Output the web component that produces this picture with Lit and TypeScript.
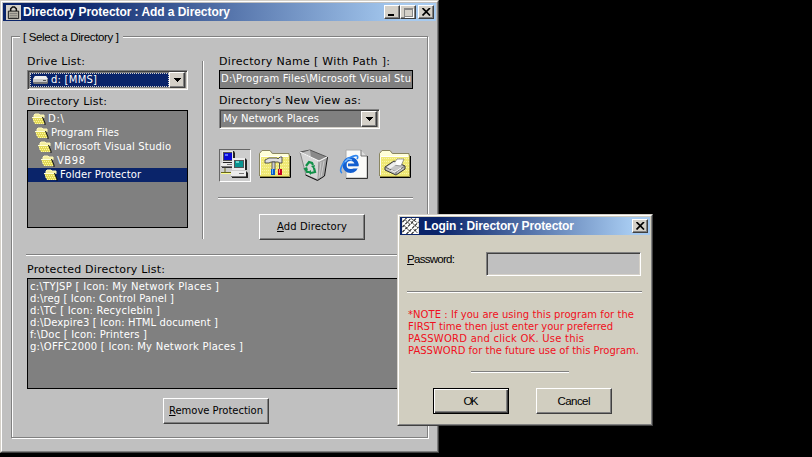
import { LitElement, html, svg, css } from "lit";
import { customElement, property } from "lit/decorators.js";

/* One line of text whose tracking is set so that it fills a given width. */
@customElement("fit-text")
class FitText extends LitElement {
  @property({ type: Number }) width = 0;
  static styles = css`
    :host { display: block; white-space: pre; flex: none; }
    .run { display: inline-block; white-space: pre; }
  `;
  firstUpdated() {
    const run = this.renderRoot.querySelector(".run") as HTMLElement;
    const n = (this.textContent || "").length;
    const natural = run.getBoundingClientRect().width;
    if (n > 1 && this.width) {
      const gap = (this.width - natural) / (n - 1);
      run.style.letterSpacing = `${gap.toFixed(3)}px`;
      run.style.marginRight = `${(-gap).toFixed(3)}px`;
    }
  }
  render() {
    return html`<span class="run"><slot></slot></span>`;
  }
}

const folder = svg`
  <path d="M1 8V4l2-2h8l2 3h17v3z" fill="#ffffd8"/>
  <path d="M1 7h29v20H1z" fill="#efe874"/>
  <path d="M1 9.500h29M1 12.500h29M1 15.500h29M1 18.500h29M1 21.500h29M1 24.500h29" stroke="#faf6a8" stroke-dasharray="1 1"/>
  <path d="M.5 27V4.500l2.500-3h8l2.500 3h16.500v2" fill="none" stroke="#8a8660"/>
  <path d="M1.500 26V7.500h28" stroke="#fff" fill="none"/>
  <path d="M30.500 6v21.500H1" fill="none" stroke="#999040"/>
  <path d="M31.500 7v21.500H1" fill="none" stroke="#000"/>`;

const icons = {
  network: svg`
    <path d="M4 2h11l1 2v10H4z" fill="#222"/>
    <path d="M3 2h11v11H3z" fill="#e4e4e4"/><path d="M4 3h9v9H4z" fill="#555"/>
    <path d="M5 4h8v7H5z" fill="#0808d4"/><path d="M6 5h3v2H6z" fill="#5b70ff"/>
    <path d="M3 14h13v5H3z" fill="#333"/><path d="M2 14h12v4H2z" fill="#ececec"/><path d="M8 15h5v1H8zM2 17h12v1H2z" fill="#777"/>
    <path d="M6 19v4M2 23.500h11" stroke="#66661c" fill="none"/><path d="M2 24.500h11" stroke="#ffff90" fill="none"/>
    <path d="M15 9h11l2 2v10H15z" fill="#222"/>
    <path d="M13 9h13v12H13z" fill="#ececec"/><path d="M15 11h10v8H15z" fill="#555"/>
    <path d="M16 12h8v6h-8z" fill="#089490"/><path d="M17 12h3v2h-3z" fill="#6bd6ca"/>
    <path d="M13 22h14l2 2v5H13z" fill="#222"/><path d="M12 22h15v6H12z" fill="#ececec"/>
    <path d="M20 24h5v1h-5zM12 27h15v1H12z" fill="#777"/>`,
  panel: svg`${folder}
    <path d="M6 11l4-2h8l1 1 2-2h2v6h-2l-2-1h-7l-2 1H6z" fill="#e0e0e0" stroke="#333" stroke-width=".8"/>
    <path d="M13 13h3v8h-3z" fill="#ccc" stroke="#333" stroke-width=".7"/>
    <path d="M20 14h1v7h-1z" fill="#555"/>
    <path d="M12 20h4v6h-4z" fill="#075bc8"/><path d="M13 20h1v5h-1z" fill="#61b4ff"/>
    <path d="M19 20h4v6h-4z" fill="#c40022"/><path d="M20 20h1v4h-1z" fill="#ff8190"/>`,
  bin: svg`
    <path d="M1 3l10-2 17 7-8 4z" fill="#8a8a8a" stroke="#555"/>
    <path d="M11 1l1 7-9-4z" fill="#bbb"/>
    <path d="M1 3l6 23 12 5 1-19z" fill="#d6d6d6" stroke="#888"/>
    <path d="M20 12l8-4-3 19-6 4z" fill="#a4a4a4"/>
    <path d="M22 13l-2 16M25 12l-3 16" stroke="#ccc"/>
    <path d="M28.500 8l-3 19-7 4.500-12-5.500" fill="none" stroke="#111"/>
    <path d="M1 3l19 9 8-4" fill="none" stroke="#f6f6f6" stroke-width="1.200"/>
    <path d="M7 17l3-4 3 1 1 2M15 19l1 4-4 1M6 19l2 4h2" fill="none" stroke="#129048" stroke-width="2.200"/>
    <path d="M12 17l4-1-1 4zM12 21v5l-3-3zM4 20l4-2 1 3z" fill="#129048"/>`,
  ie: svg`
    <path d="M7 1h15l6 6v22H7z" fill="#fafaf8" stroke="#aaa"/>
    <path d="M22 1v6h6" fill="#ddd" stroke="#777"/><path d="M28.500 7v22.500H7" fill="none" stroke="#333"/>
    <ellipse cx="11.500" cy="16" rx="6" ry="6" fill="none" stroke="#145fd0" stroke-width="4"/>
    <path d="M12 17h9v2.500h-9z" fill="#fafaf8"/><path d="M9 14.500h10.500v2.800H9z" fill="#145fd0"/>
    <path d="M3 24C-1 22 4 12 11 8.500S20 7 18 10" fill="none" stroke="#2e86f0" stroke-width="1.600"/>
    <path d="M6 13l3-3 4 1" fill="none" stroke="#78baff" stroke-width="1.400"/>`,
  printer: svg`${folder}
    <path d="M6 18l9-6 11 5v3l-9 6-11-5z" fill="#c5c5c5" stroke="#333"/>
    <path d="M6 18l11 5 9-6M17 23v3" fill="none" stroke="#666"/>
    <path d="M14 16l4-6h7l-3 7z" fill="#fff" stroke="#777" stroke-width=".7"/>
    <path d="M8 18l7-5 3 2-7 5z" fill="#eee"/><path d="M12 21l4 2 6-4" stroke="#fff" fill="none"/>`,
};

const openFolder = svg`<svg width="14" height="12" viewBox="0 0 14 12">
  <path d="M2 9V2l1-1h4l1 1h4v3" fill="#f3eea0" stroke="#fff8bc"/>
  <path d="M0 4h10l3 7H3z" fill="#e2d956"/><path d="M0 4.500h10" stroke="#ffffd8"/>
  <path d="M1 6.500h9M2 8.500h9M3 10.500h9" stroke="#fff7a0" stroke-dasharray="1 1"/>
  <path d="M10.500 4l2.500 6v2" fill="none" stroke="#111"/></svg>`;

const cross = svg`<svg width="9" height="8" viewBox="0 0 9 8"><path d="M.5 0l7.500 7.500M8 0L.5 7.500" stroke="#000" stroke-width="1.700"/></svg>`;

@customElement("app-root")
class AppRoot extends LitElement {
  static styles = css`
    :host { display: block; position: relative; width: 812px; height: 457px; background: #000; overflow: hidden; color: #000; }
    * { box-sizing: border-box; }
    svg { display: block; flex: none; }
    .window { position: absolute; display: flex; flex-direction: column; border: 1px solid; border-color: #d4d0c8 #404040 #404040 #d4d0c8; }
    .inner { flex: 1; display: flex; flex-direction: column; border: 1px solid; border-color: #fff #808080 #808080 #fff; padding: 1px; }
    .main { left: 0; top: 0; width: 439px; height: 453px; background: #c0c0c0; }
    .login { left: 397px; top: 214px; width: 256px; height: 212px; background: #d1cec0; }
    .bar { height: 18px; flex: none; display: flex; align-items: center; padding-right: 2px; background: linear-gradient(90deg, #0a246a 15%, #a6caf0 92%); color: #fff; font: bold 12px/18px "Liberation Sans", sans-serif; }
    .bar .grow { flex: 1; }
    .lock { width: 15px; height: 15px; margin: 0 2px 0 3px; background: #d4d0c8; }
    .login .lock { width: 17px; height: 16px; margin: 0 5px 0 2px; }
    .sys { width: 16px; height: 14px; display: flex; align-items: center; justify-content: center; background: #d4d0c8; border: 1px solid; border-color: #fff #404040 #404040 #fff; box-shadow: inset -1px -1px #808080; }
    .sys.gap { margin-left: 2px; }
    .min { width: 6px; height: 2px; background: #000; margin: 6px 2px 0 0; }
    .max { width: 9px; height: 9px; border: 1px solid #888; border-top-width: 2px; box-shadow: 1px 1px #fff; }

    .frame { margin: 15px 8px 12px 8px; flex: 1; border: 1px solid #808080; box-shadow: inset 1px 1px #fff, 1px 1px #fff; padding: 0 13px 0 15px; min-height: 0; display: flex; flex-direction: column; }
    .legend { align-self: flex-start; height: 14px; margin: -7px 0 0 -7px; padding: 0 4px 0 3px; background: #c0c0c0; font: 11.500px/14px "Liberation Sans", sans-serif; }
    .cols { display: flex; height: 187px; margin-top: 9px; }
    .left { width: 161px; padding-top: 1px; }
    .vline { width: 2px; height: 178px; margin: 8px 15px 0 14px; background: linear-gradient(90deg, #808080 50%, #fff 50%); }
    .right { width: 194px; padding-top: 1px; }
    .label { height: 16px; font: 11px/15px "DejaVu Sans", sans-serif; }
    .label.second { margin-top: 4px; }
    .small { font: 10px/14px "DejaVu Sans", sans-serif; color: #fff; }
    .combo { height: 20px; display: flex; border: 1px solid; border-color: #808080 #fff #fff #808080; box-shadow: inset 1px 1px #404040, inset -1px -1px #d4d0c8; padding: 2px; background: #808080; align-items: center; }
    .combo.view { width: 161px; padding-left: 3px; }
    .chosen { width: 140px; height: 14px; display: flex; align-items: center; background: #0a246a; outline: 1px dotted #d4d0c8; outline-offset: -1px; padding: 0 0 0 3px; gap: 3px; }
    .view fit-text { flex: 1; }
    .drop { margin-left: auto; width: 16px; height: 16px; flex: none; display: flex; align-items: center; justify-content: center; background: #d4d0c8; border: 1px solid; border-color: #fff #404040 #404040 #fff; box-shadow: inset -1px -1px #808080; }
    .list { border: 1px solid #000; background: #808080; overflow: hidden; }
    .tree { height: 118px; padding-top: 1px; }
    .row { height: 14px; display: flex; align-items: center; gap: 2px; }
    .row.on { background: #0a246a; }
    .l0 { padding-left: 4px; } .l1 { padding-left: 7px; } .l2 { padding-left: 10px; } .l3 { padding-left: 13px; } .l4 { padding-left: 16px; }
    .field { height: 19px; border: 1px solid #000; background: #808080; overflow: hidden; padding: 1px 0 0 1px; margin-bottom: 1px; }
    .icons { display: flex; margin-top: 20px; gap: 8px; height: 33px; }
    .pressed { border: 1px solid; border-color: #666 #fff #fff #666; background: #cdcdcd; width: 32px; height: 33px; }
    .pressed svg { margin: -1px 0 0 -1px; }
    .line { height: 2px; flex: none; border-top: 1px solid #808080; background: #fff; }
    .l-right { margin: 15px 0 15px -1px; }
    .btn { width: 106px; height: 26px; display: flex; align-items: center; justify-content: center; border: 1px solid; border-color: #fff #404040 #404040 #fff; box-shadow: inset -1px -1px #808080; font: 10px/14px "DejaVu Sans", sans-serif; flex: none; }
    .add { margin-left: 40px; }
    .protected { height: 111px; padding: 2px 0 0 2px; flex: none; }
    .protected .small { line-height: 12px; height: 12px; }
    .remove { margin: 9px 0 0 136px; }
    .l-main { margin: 14px 0 6px -1px; }

    .pw { display: flex; margin: 17px 9px 0 7px; height: 24px; font: 11.500px/15px "Liberation Sans", sans-serif; }
    .pw fit-text { width: 79px; }
    .box { width: 155px; height: 24px; background: #c0c0c0; border: 1px solid; border-color: #808080 #fff #fff #808080; box-shadow: inset 1px 1px #404040, inset -1px -1px #d4d0c8; }
    .l-a { margin: 15px 8px 0 7px; }
    .note { margin: 16px 0 0 8px; color: #f01020; font: 10px/12px "DejaVu Sans", sans-serif; }
    .l-b { width: 98px; margin: 14px 0 0 71px; }
    .actions { display: flex; gap: 27px; margin: 15px 0 0 33px; }
    .actions .btn { width: 76px; font: 11.500px/14px "Liberation Sans", sans-serif; }
    .actions .ok { border-color: #000; box-shadow: inset 1px 1px #fff, inset -1px -1px #404040, inset -2px -2px #808080; }
  `;

  render() {
    const arrow = svg`<svg width="7" height="4" viewBox="0 0 7 4" shape-rendering="crispEdges"><path d="M0 0h7v1H0zM1 1h5v1H1zM2 2h3v1H2zM3 3h1v1H3z"/></svg>`;
    const pic = (g: unknown) => html`<svg width="32" height="32" viewBox="0 0 32 32">${g}</svg>`;
    const tree: [string, number][] = [["D:\\", 16], ["Program Files", 68], ["Microsoft Visual Studio", 117], ["VB98", 28], ["Folder Protector", 81]];
    const items: [string, number][] = [
      ["c:\\TYJSP [ Icon: My Network Places ]", 189],
      ["d:\\reg [ Icon: Control Panel ]", 144],
      ["d:\\TC [ Icon: Recyclebin ]", 130],
      ["d:\\Dexpire3 [ Icon: HTML document ]", 188],
      ["f:\\Doc [ Icon: Printers ]", 117],
      ["g:\\OFFC2000 [ Icon: My Network Places ]", 213],
    ];
    const note: [string, number][] = [
      ["*NOTE : If you are using this program for the", 226],
      ["FIRST time then just enter your preferred", 205],
      ["PASSWORD and click OK. Use this", 176],
      ["PASSWORD for the future use of this Program.", 231],
    ];
    return html`
      <section class="window main"><div class="inner">
        <header class="bar">
          <svg class="lock" viewBox="0 0 16 16"><path d="M5 7V4l2-2h2l2 2v3" fill="none" stroke="#111" stroke-width="1.600"/><path d="M2.500 6.500h11v8h-11z" fill="#b8b4a8" stroke="#111"/><path d="M4 9h8M4 11h8M4 13h8" stroke="#555" stroke-width=".6"/></svg>
          <fit-text width="207">Directory Protector : Add a Directory</fit-text>
          <span class="grow"></span>
          <span class="sys"><i class="min"></i></span><span class="sys"><i class="max"></i></span><span class="sys gap">${cross}</span>
        </header>
        <div class="frame">
          <div class="legend"><fit-text width="96">[ Select a Directory ]</fit-text></div>
          <div class="cols">
            <div class="left">
              <div class="label"><fit-text width="58">Drive List:</fit-text></div>
              <div class="combo small">
                <div class="chosen">
                  <svg width="15" height="8" viewBox="0 0 15 8"><path d="M2 0h11l2 3v4l-1 1H1L0 7V3z" fill="#777"/><path d="M2 0h11l2 3H0z" fill="#eee"/><path d="M0 3h14v3H0z" fill="#c8c8c8"/><path d="M10 4h3v1h-3z" fill="#555"/></svg>
                  <fit-text width="46">d: [MMS]</fit-text>
                </div>
                <span class="drop">${arrow}</span>
              </div>
              <div class="label second"><fit-text width="80">Directory List:</fit-text></div>
              <div class="list tree small">
                ${tree.map(([t, w], i) => html`<div class="row l${i} ${i === 4 ? "on" : ""}">${openFolder}<fit-text .width=${w}>${t}</fit-text></div>`)}
              </div>
            </div>
            <div class="vline"></div>
            <div class="right">
              <div class="label"><fit-text width="171">Directory Name [ With Path ]:</fit-text></div>
              <div class="field small"><fit-text width="190">D:\\Program Files\\Microsoft Visual Stu</fit-text></div>
              <div class="label second"><fit-text width="142">Directory's New View as:</fit-text></div>
              <div class="combo view small"><fit-text width="96">My Network Places</fit-text><span class="drop">${arrow}</span></div>
              <div class="icons"><span class="pressed">${pic(icons.network)}</span>${pic(icons.panel)}${pic(icons.bin)}${pic(icons.ie)}${pic(icons.printer)}</div>
              <div class="line l-right"></div>
              <div class="btn add"><fit-text width="70"><u>A</u>dd Directory</fit-text></div>
            </div>
          </div>
          <div class="line l-main"></div>
          <div class="label"><fit-text width="138">Protected Directory List:</fit-text></div>
          <div class="list protected">${items.map(([t, w]) => html`<div class="small"><fit-text .width=${w}>${t}</fit-text></div>`)}</div>
          <div class="btn remove"><fit-text width="94"><u>R</u>emove Protection</fit-text></div>
        </div>
      </div></section>

      <section class="window login"><div class="inner">
        <header class="bar">
          <svg class="lock" viewBox="0 0 16 16"><path d="M0 0h16v16H0z" fill="#fff"/><path d="M0 4l4-4M0 9l9-9M0 14l14-14M4 16L16 4M9 16l7-7" stroke="#222" stroke-width="1.100" stroke-dasharray="3 1"/><path d="M2 1l5 5M8 3l6 6M2 8l6 6M9 1l5 3M11 11l4 4" stroke="#222" stroke-width=".8"/></svg>
          <fit-text width="150">Login : Directory Protector</fit-text>
          <span class="grow"></span><span class="sys">${cross}</span>
        </header>
        <div class="pw"><fit-text width="48"><u>P</u>assword:</fit-text><div class="box"></div></div>
        <div class="line l-a"></div>
        <div class="note">${note.map(([t, w]) => html`<fit-text .width=${w}>${t}</fit-text>`)}</div>
        <div class="line l-b"></div>
        <div class="actions"><div class="btn ok"><fit-text width="15">OK</fit-text></div><div class="btn"><fit-text width="33">Cancel</fit-text></div></div>
      </div></section>`;
  }
}
